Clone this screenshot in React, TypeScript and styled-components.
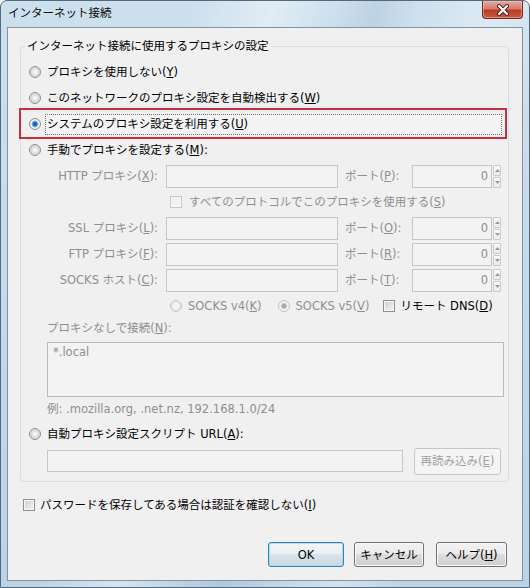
import React from "react"
import styled, { createGlobalStyle } from "styled-components"

const GlobalStyle = createGlobalStyle`
  html, body {
    margin: 0;
    padding: 0;
    background: #ffffff;
  }
  body {
    font-family: "DejaVu Sans", "Noto Sans CJK JP", sans-serif;
    font-size: 11.5px;
    line-height: 16px;
    color: #000000;
  }
  * {
    box-sizing: border-box;
  }
`

const DISABLED = "#8f8f8f"

const Window = styled.div`
  width: 530px;
  height: 588px;
  display: flex;
  flex-direction: column;
  border: 1px solid #56697b;
  border-radius: 7px 7px 0 0;
  overflow: hidden;
  background:
    linear-gradient(105deg,
      rgba(255, 255, 255, 0) 28%,
      rgba(255, 255, 255, 0.4) 40%,
      rgba(255, 255, 255, 0) 49%,
      rgba(120, 150, 175, 0.18) 55%,
      rgba(255, 255, 255, 0) 61%,
      rgba(255, 255, 255, 0.35) 72%,
      rgba(255, 255, 255, 0) 82%),
    linear-gradient(180deg, #cde0ee 0%, #bcd3e5 100%);
`

const TitleBar = styled.div`
  height: 26px;
  flex: none;
  display: flex;
  align-items: flex-start;
  justify-content: space-between;
  padding: 0 6px 0 7px;
`

const Title = styled.span`
  line-height: 24px;
  color: #0c0c0c;
`

const CloseButton = styled.div`
  width: 41px;
  height: 18px;
  display: flex;
  align-items: center;
  justify-content: center;
  border: 1px solid #6b2a22;
  border-top: none;
  border-radius: 0 0 4px 4px;
  background: linear-gradient(180deg, #e6a99f 0%, #d67b6c 45%, #bb3b2b 55%, #cc5a3c 100%);
  box-shadow: inset 0 0 0 1px rgba(255, 210, 200, 0.45);
`

const Client = styled.div`
  flex: 1;
  margin: 0 6px 6px;
  border: 1px solid #7e93a6;
  background: #f0f0f0;
  display: flex;
  flex-direction: column;
  padding: 10px 13px 13px 12px;
`

const Group = styled.fieldset`
  margin: 0;
  min-width: 0;
  padding: 5px 4px 6px 8px;
  border: 1px solid #d8dee3;
  border-radius: 3px;
`

const Legend = styled.legend`
  padding: 0 2px;
  margin-left: -4px;
  line-height: 16px;
`

const Key = styled.span`
  text-decoration: underline;
  text-underline-offset: 1px;
`

const OptionRow = styled.div<{ $dim?: boolean; $indent?: number }>`
  height: 26px;
  display: flex;
  align-items: center;
  gap: 6px;
  padding-left: ${(p) => p.$indent ?? 0}px;
  color: ${(p) => (p.$dim ? DISABLED : "#000000")};
  white-space: nowrap;
`

const FocusRow = styled(OptionRow)`
  position: relative;

  &::after {
    content: "";
    position: absolute;
    top: -3px;
    bottom: -2px;
    left: -10px;
    right: -3px;
    border: 2px solid #c6303e;
    pointer-events: none;
  }
`

const FocusLabel = styled.span`
  flex: 1;
  height: 21px;
  display: flex;
  align-items: center;
  margin: 0 2px 0 -2px;
  padding-left: 1px;
  border: 1px dotted #6f6f6f;
  background: #f4f4f4;
`

const Radio = styled.span<{ $checked?: boolean; $disabled?: boolean }>`
  width: 12px;
  height: 12px;
  flex: none;
  border-radius: 50%;
  border: 1px solid ${(p) => (p.$disabled ? "#c4c4c4" : "#8e8f8f")};
  background: ${(p) =>
    p.$checked
      ? p.$disabled
        ? "radial-gradient(circle, #9d9d9d 0, #b4b4b4 2px, #dcdcdc 3.2px, #fafafa 3.8px, #ececec 5.5px)"
        : "radial-gradient(circle, #123f7a 0, #2f7fcf 2px, #86c3ee 3.2px, #ffffff 3.8px, #e6e6e6 5.5px)"
      : p.$disabled
        ? "radial-gradient(circle, #fbfbfb 0, #f1f1f1 2.5px, #e6e6e6 4.5px, #f7f7f7 5.5px)"
        : "radial-gradient(circle, #ffffff 0, #eeeeee 2px, #d2d2d2 4.3px, #f5f5f5 5.5px)"};
`

const CheckBox = styled.span<{ $disabled?: boolean }>`
  width: 12px;
  height: 12px;
  flex: none;
  border: 1px solid ${(p) => (p.$disabled ? "#c6c6c6" : "#8f8f8f")};
  background: ${(p) =>
    p.$disabled
      ? "linear-gradient(135deg, #ebebeb, #f8f8f8)"
      : "linear-gradient(135deg, #cfcfcf, #f3f3f3)"};
  box-shadow: inset 0 0 0 1px #f7f7f7;
`

const InlineOption = styled.span<{ $gap?: number; $dim?: boolean; $offset?: number }>`
  display: flex;
  align-items: center;
  gap: ${(p) => p.$gap ?? 6}px;
  margin-left: ${(p) => p.$offset ?? 0}px;
  color: ${(p) => (p.$dim ? DISABLED : "#000000")};
`

const FieldRow = styled.div`
  height: 26px;
  display: flex;
  align-items: center;
  color: ${DISABLED};
  white-space: nowrap;
`

const FieldLabel = styled.span`
  width: 129px;
  margin-right: 8px;
  text-align: right;
`

const TextBox = styled.div<{ $width: number; $height?: number }>`
  width: ${(p) => p.$width}px;
  height: ${(p) => p.$height ?? 23}px;
  flex: none;
  border: 1px solid #c4c7ca;
  background: #f3f3f3;
`

const PortLabel = styled.span`
  width: 60px;
  margin: 0 7px;
`

const PortBox = styled.div`
  width: 80px;
  height: 23px;
  display: flex;
  align-items: center;
  justify-content: flex-end;
  padding-right: 3px;
  border: 1px solid #c4c7ca;
  background: #f3f3f3;
  color: ${DISABLED};
`

const Spinner = styled.div`
  width: 8px;
  height: 23px;
  margin-left: 1px;
  display: flex;
  flex-direction: column;
  gap: 1px;
`

const SpinHalf = styled.div`
  flex: 1;
  display: flex;
  align-items: center;
  justify-content: center;
  border: 1px solid #cbcbcb;
  border-radius: 1px;
  background: linear-gradient(180deg, #f9f9f9, #ebebeb);
`

const SubLabel = styled.div<{ $height: number }>`
  height: ${(p) => p.$height}px;
  margin-left: 18px;
  display: flex;
  align-items: center;
  color: ${DISABLED};
`

const ListBox = styled.div`
  height: 55px;
  margin: 5px 0 0 18px;
  padding: 1px 5px;
  border: 1px solid #b9bcbf;
  background: #f3f3f3;
  color: ${DISABLED};
`

const UrlRow = styled.div`
  height: 28px;
  margin-left: 18px;
  display: flex;
  align-items: center;
`

const ReloadButton = styled.div`
  width: 87px;
  height: 27px;
  margin-left: 11px;
  display: flex;
  align-items: center;
  justify-content: center;
  border: 1px solid #c3c6c9;
  border-radius: 3px;
  background: #f4f4f4;
  color: #a2a2a2;
  white-space: nowrap;
`

const PasswordRow = styled.div`
  height: 20px;
  margin-top: 13px;
  padding-left: 3px;
  display: flex;
  align-items: center;
  gap: 5px;
`

const ButtonBar = styled.div`
  margin-top: auto;
  padding-right: 2px;
  display: flex;
  justify-content: flex-end;
`

const DialogButton = styled.div<{ $width: number; $gap?: number; $default?: boolean }>`
  width: ${(p) => p.$width}px;
  height: 25px;
  margin-left: ${(p) => p.$gap ?? 0}px;
  display: flex;
  align-items: center;
  justify-content: center;
  border: 1px solid ${(p) => (p.$default ? "#3c7fb1" : "#707070")};
  border-radius: 3px;
  background: ${(p) =>
    p.$default
      ? "linear-gradient(180deg, #f3f6f8 0%, #e9eef2 50%, #d9e3ea 50%, #cbd9e3 100%)"
      : "linear-gradient(180deg, #f2f2f2 0%, #ebebeb 50%, #dddddd 50%, #cfcfcf 100%)"};
  box-shadow: inset 0 0 0 1px ${(p) => (p.$default ? "#a6dcf7" : "#fbfbfb")};
`

const ArrowUp = () => (
  <svg width="5" height="3" viewBox="0 0 5 3">
    <path d="M0 3 L2.5 0 L5 3 Z" fill="#9a9a9a" />
  </svg>
)

const ArrowDown = () => (
  <svg width="5" height="3" viewBox="0 0 5 3">
    <path d="M0 0 L2.5 3 L5 0 Z" fill="#9a9a9a" />
  </svg>
)

const CloseGlyph = () => (
  <svg width="14" height="12" viewBox="0 0 14 12">
    <path d="M3 2 L11 10 M11 2 L3 10" stroke="#5a1d15" strokeWidth="4" strokeLinecap="round" />
    <path d="M3 2 L11 10 M11 2 L3 10" stroke="#ffffff" strokeWidth="2.2" strokeLinecap="round" />
  </svg>
)

const proxyRows = [
  { label: "HTTP プロキシ", key: "X", port: "P" },
  { label: "SSL プロキシ", key: "L", port: "O" },
  { label: "FTP プロキシ", key: "F", port: "R" },
  { label: "SOCKS ホスト", key: "C", port: "T" },
]

const ProxyField = ({ label, hotkey, port }: { label: string; hotkey: string; port: string }) => (
  <FieldRow>
    <FieldLabel>
      {label}(<Key>{hotkey}</Key>):
    </FieldLabel>
    <TextBox $width={172} />
    <PortLabel>
      ポート(<Key>{port}</Key>):
    </PortLabel>
    <PortBox>0</PortBox>
    <Spinner>
      <SpinHalf>
        <ArrowUp />
      </SpinHalf>
      <SpinHalf>
        <ArrowDown />
      </SpinHalf>
    </Spinner>
  </FieldRow>
)

const App = () => {
  const [http, ...others] = proxyRows
  return (
    <>
      <GlobalStyle />
      <Window>
        <TitleBar>
          <Title>インターネット接続</Title>
          <CloseButton>
            <CloseGlyph />
          </CloseButton>
        </TitleBar>
        <Client>
          <Group>
            <Legend>インターネット接続に使用するプロキシの設定</Legend>
            <OptionRow>
              <Radio />
              <span>
                プロキシを使用しない(<Key>Y</Key>)
              </span>
            </OptionRow>
            <OptionRow>
              <Radio />
              <span>
                このネットワークのプロキシ設定を自動検出する(<Key>W</Key>)
              </span>
            </OptionRow>
            <FocusRow>
              <Radio $checked />
              <FocusLabel>
                システムのプロキシ設定を利用する(<Key>U</Key>)
              </FocusLabel>
            </FocusRow>
            <OptionRow>
              <Radio />
              <span>
                手動でプロキシを設定する(<Key>M</Key>):
              </span>
            </OptionRow>

            <ProxyField label={http.label} hotkey={http.key} port={http.port} />
            <OptionRow $dim $indent={141} style={{ gap: 7 }}>
              <CheckBox $disabled />
              <span>
                すべてのプロトコルでこのプロキシを使用する(<Key>S</Key>)
              </span>
            </OptionRow>
            {others.map((row) => (
              <ProxyField key={row.key} label={row.label} hotkey={row.key} port={row.port} />
            ))}

            <OptionRow $indent={141} style={{ gap: 0 }}>
              <InlineOption $dim>
                <Radio $disabled />
                <span>
                  SOCKS v4(<Key>K</Key>)
                </span>
              </InlineOption>
              <InlineOption $dim $offset={16}>
                <Radio $disabled $checked />
                <span>
                  SOCKS v5(<Key>V</Key>)
                </span>
              </InlineOption>
              <InlineOption $gap={5} $offset={14}>
                <CheckBox />
                <span>
                  リモート DNS(<Key>D</Key>)
                </span>
              </InlineOption>
            </OptionRow>

            <SubLabel $height={18}>
              プロキシなしで接続(<Key>N</Key>):
            </SubLabel>
            <ListBox>*.local</ListBox>
            <SubLabel $height={24}>例: .mozilla.org, .net.nz, 192.168.1.0/24</SubLabel>

            <OptionRow>
              <Radio />
              <span>
                自動プロキシ設定スクリプト URL(<Key>A</Key>):
              </span>
            </OptionRow>
            <UrlRow>
              <TextBox $width={356} $height={22} />
              <ReloadButton>
                再読み込み(<Key>E</Key>)
              </ReloadButton>
            </UrlRow>
          </Group>

          <PasswordRow>
            <CheckBox />
            <span>
              パスワードを保存してある場合は認証を確認しない(<Key>I</Key>)
            </span>
          </PasswordRow>

          <ButtonBar>
            <DialogButton $width={76} $default>
              OK
            </DialogButton>
            <DialogButton $width={70} $gap={10}>
              キャンセル
            </DialogButton>
            <DialogButton $width={71} $gap={12}>
              ヘルプ(<Key>H</Key>)
            </DialogButton>
          </ButtonBar>
        </Client>
      </Window>
    </>
  )
}

export default App
